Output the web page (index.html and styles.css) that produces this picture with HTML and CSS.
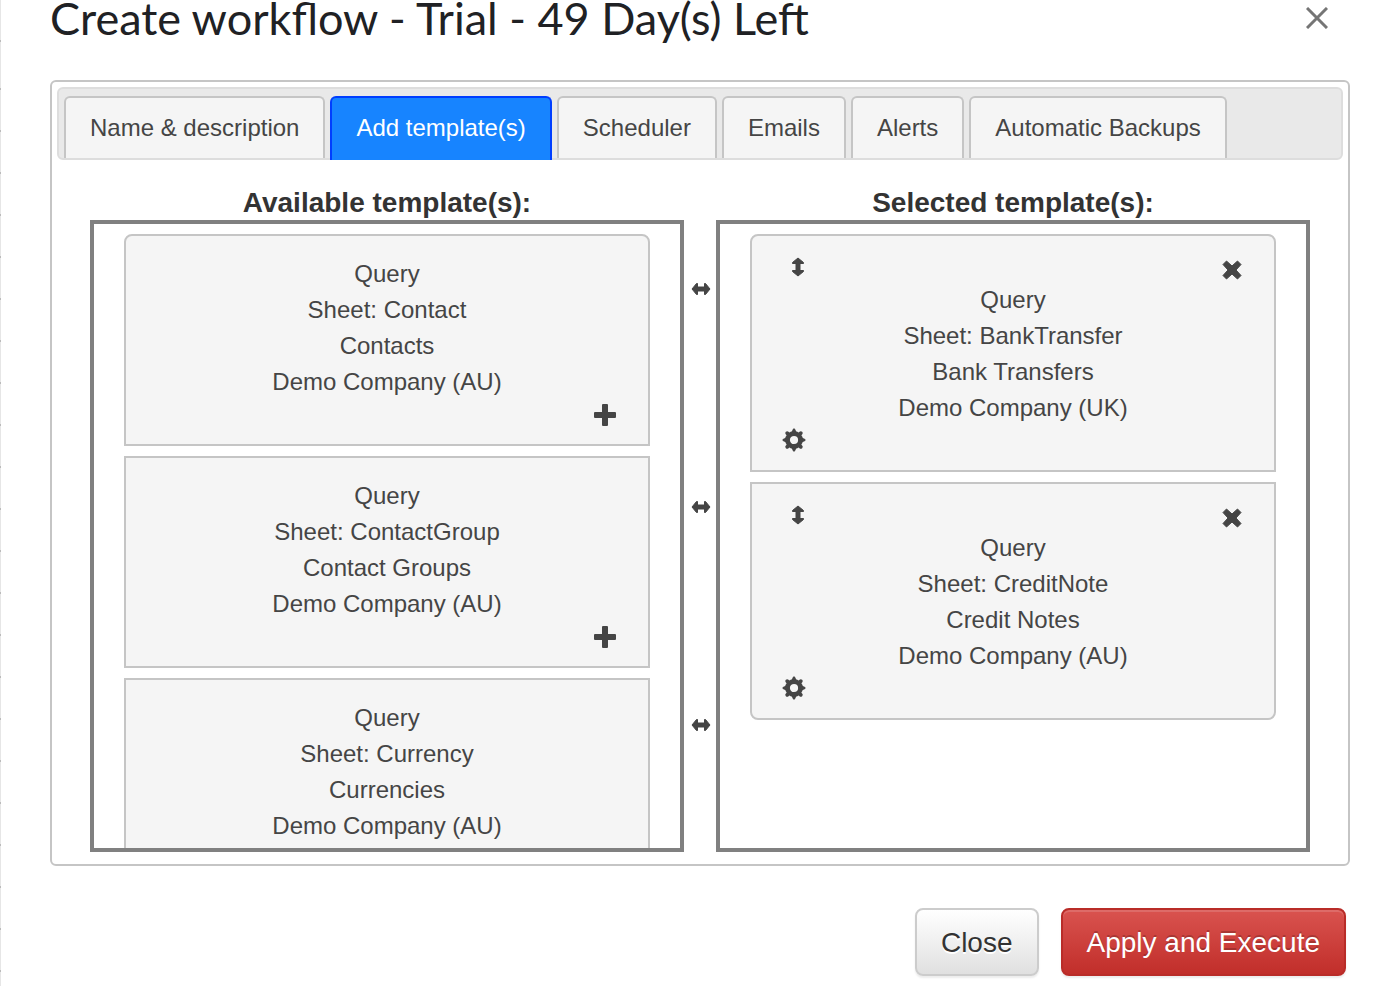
FILE: index.html
```
<!DOCTYPE html>
<html lang="en">
<head>
  <meta charset="utf-8">
  <title>Create workflow</title>
  <link rel="stylesheet" href="styles.css">
</head>
<body>
  <!-- icon sprites -->
  <svg class="sprites" aria-hidden="true">
    <symbol id="i-plus" viewBox="0 0 22 22">
      <path d="M9 0h4q1 0 1 1v7h7q1 0 1 1v4q0 1-1 1h-7v7q0 1-1 1H9q-1 0-1-1v-7H1q-1 0-1-1V9q0-1 1-1h7V1q0-1 1-1z"/>
    </symbol>
    <symbol id="i-remove" viewBox="0 0 20 20">
      <path d="M4.500 1L10 6 15.500 1 19 4.500 14 10l5 5.500-3.500 3.500L10 14 4.500 19 1 15.500 6 10 1 4.500z" stroke-width="1" stroke-linejoin="round"/>
    </symbol>
    <symbol id="i-arrows" viewBox="0 0 20 14">
      <path d="M1 7L5.500 1.500h1V5h7V1.500h1L19 7l-4.500 5.500h-1V9h-7v3.500h-1z" stroke-width="1" stroke-linejoin="round"/>
    </symbol>
    <symbol id="i-gear" viewBox="0 0 24 24">
      <circle cx="12" cy="12" r="6.500" fill="none" stroke-width="4.800"/>
      <path d="M11.500 1.200h1l1.800 4h-4.600zM11.500 22.800h1l1.800-4h-4.600zM1.200 11.500v1l4 1.800v-4.600zM22.800 11.500v1l-4 1.800v-4.600z" stroke-width="1.200" stroke-linejoin="round"/>
      <path d="M5.200 5.200l2 2M16.800 16.800l2 2M18.800 5.200l-2 2M7.200 16.800l-2 2" fill="none" stroke-width="3.800" stroke-linecap="round"/>
    </symbol>
  </svg>

  <div class="dialog">
    <div class="dialog-header">
      <h1>Create workflow - Trial - 49 Day(s) Left</h1>
      <button class="icon-btn dialog-x" aria-label="Close dialog">
        <svg width="22" height="22" viewBox="0 0 22 22"><path d="M1 1l20 20M21 1L1 21" fill="none" stroke-width="3"/></svg>
      </button>
    </div>

    <div class="tabs">
      <div class="tabs-nav" role="tablist">
        <button class="tab" role="tab">Name &amp; description</button>
        <button class="tab active" role="tab" aria-selected="true">Add template(s)</button>
        <button class="tab" role="tab">Scheduler</button>
        <button class="tab" role="tab">Emails</button>
        <button class="tab" role="tab">Alerts</button>
        <button class="tab" role="tab">Automatic Backups</button>
      </div>

      <div class="tab-panel" role="tabpanel">
        <div class="column">
          <h2>Available template(s):</h2>
          <ul class="list">
            <li class="card">
              <div>Query</div>
              <div>Sheet: Contact</div>
              <div>Contacts</div>
              <div>Demo Company (AU)</div>
              <div class="card-add"><button class="icon-btn" aria-label="Add"><svg width="22" height="22"><use href="#i-plus"/></svg></button></div>
            </li>
            <li class="card">
              <div>Query</div>
              <div>Sheet: ContactGroup</div>
              <div>Contact Groups</div>
              <div>Demo Company (AU)</div>
              <div class="card-add"><button class="icon-btn" aria-label="Add"><svg width="22" height="22"><use href="#i-plus"/></svg></button></div>
            </li>
            <li class="card">
              <div>Query</div>
              <div>Sheet: Currency</div>
              <div>Currencies</div>
              <div>Demo Company (AU)</div>
              <div class="card-add"><button class="icon-btn" aria-label="Add"><svg width="22" height="22"><use href="#i-plus"/></svg></button></div>
            </li>
          </ul>
        </div>

        <div class="between">
          <svg width="20" height="14"><use href="#i-arrows"/></svg>
          <svg width="20" height="14"><use href="#i-arrows"/></svg>
          <svg width="20" height="14"><use href="#i-arrows"/></svg>
        </div>

        <div class="column">
          <h2>Selected template(s):</h2>
          <ul class="list">
            <li class="card">
              <div class="card-top">
                <svg class="move" width="20" height="14"><use href="#i-arrows"/></svg>
                <button class="icon-btn" aria-label="Remove"><svg width="20" height="20"><use href="#i-remove"/></svg></button>
              </div>
              <div>Query</div>
              <div>Sheet: BankTransfer</div>
              <div>Bank Transfers</div>
              <div>Demo Company (UK)</div>
              <div class="card-settings"><button class="icon-btn" aria-label="Settings"><svg width="24" height="24"><use href="#i-gear"/></svg></button></div>
            </li>
            <li class="card last">
              <div class="card-top">
                <svg class="move" width="20" height="14"><use href="#i-arrows"/></svg>
                <button class="icon-btn" aria-label="Remove"><svg width="20" height="20"><use href="#i-remove"/></svg></button>
              </div>
              <div>Query</div>
              <div>Sheet: CreditNote</div>
              <div>Credit Notes</div>
              <div>Demo Company (AU)</div>
              <div class="card-settings"><button class="icon-btn" aria-label="Settings"><svg width="24" height="24"><use href="#i-gear"/></svg></button></div>
            </li>
          </ul>
        </div>
      </div>
    </div>

    <div class="dialog-footer">
      <button class="btn">Close</button>
      <button class="btn btn-danger">Apply and Execute</button>
    </div>
  </div>
</body>
</html>
```
FILE: styles.css
```
*, *:before, *:after { box-sizing: border-box; }
body {
  margin: 0;
  /* edge of the spreadsheet behind the dialog: row lines over a light strip */
  background:
    linear-gradient(#e6e6e6 40px, #bbb 40px 42px, #e6e6e6 42px) 0 0 / 1px 84px no-repeat,
    repeating-linear-gradient(#e6e6e6 0 4px, #bbb 4px 6px, #e6e6e6 6px 42px) 0 0 / 1px 100% no-repeat,
    #fff;
  font-family: "Liberation Sans", Arial, sans-serif;
  font-size: 24px;
  line-height: 36px;
  color: #454545;
}
h1, h2, ul { margin: 0; padding: 0; }
button { font: inherit; cursor: pointer; }
svg { display: block; fill: #454545; stroke: #454545; stroke-width: 0; }
.sprites { position: absolute; width: 0; height: 0; }

.icon-btn { display: block; padding: 0; border: 0; background: none; }

/* dialog */
.dialog { padding: 0 30px 10px 50px; }
.dialog-header {
  display: flex;
  justify-content: space-between;
  align-items: center;
  height: 36px;
  padding-right: 22px;
  margin-bottom: 44px;
}
.dialog-header h1 {
  font-family: Lato, sans-serif;
  font-size: 45px;
  font-weight: 400;
  line-height: 36px;
  color: #202124;
}
.dialog-x svg { stroke: #757575; }

/* tabs */
.tabs { padding: 5px; border: 2px solid #c5c5c5; border-radius: 6px; }
.tabs-nav {
  display: flex;
  gap: 5px;
  padding: 7px 5px 0;
  border: 2px solid #ddd;
  border-radius: 6px;
  background: #e9e9e9;
}
.tab {
  padding: 13px 24px;
  border: 2px solid #c5c5c5;
  border-bottom: 0;
  border-radius: 6px 6px 0 0;
  background: #f5f5f5;
  color: #454545;
  line-height: 34px;
}
.tab.active {
  margin-bottom: -2px;
  padding-bottom: 15px;
  border-color: #003eff;
  background: #1784ff;
  color: #fff;
}
.tab-panel { display: flex; padding: 24px 33px 7px; }

/* template lists */
.column { flex: 1; }
.column h2 { padding-top: 2px; font-size: 28px; line-height: 34px; text-align: center; color: #333; }
.list {
  height: 632px;
  padding: 10px 30px;
  border: 4px solid #808080;
  list-style: none;
  overflow-y: auto;
  scrollbar-width: none;
}
.card {
  margin-bottom: 10px;
  padding: 20px 30px 14px;
  border: 2px solid #c5c5c5;
  background: #f5f5f5;
  text-align: center;
}
.card:first-child { border-radius: 8px 8px 0 0; }
.card.last { border-radius: 0 0 8px 8px; }
.card-add { display: flex; justify-content: flex-end; align-items: center; height: 30px; padding-right: 2px; }
.card-top { display: flex; justify-content: space-between; align-items: flex-start; height: 26px; padding: 4px 2px 0 6px; }
.card-settings { display: flex; align-items: flex-start; height: 30px; padding-top: 2px; }
.move { transform: rotate(90deg); }

.between {
  display: flex;
  flex-direction: column;
  align-items: center;
  gap: 204px;
  width: 32px;
  padding: 98px 0 0 2px;
}

/* footer */
.dialog-footer { display: flex; justify-content: flex-end; gap: 22px; margin-top: 42px; padding-right: 4px; }
.btn {
  padding: 13px 24px 11px;
  border: 2px solid #ccc;
  border-radius: 8px;
  background: linear-gradient(#fff, #e0e0e0);
  box-shadow: 0 2px 2px rgba(0, 0, 0, 0.08);
  color: #333;
  font-size: 28px;
  line-height: 40px;
  text-shadow: 0 2px 0 #fff;
}
.btn-danger {
  border-color: #b92c28;
  background: linear-gradient(#d9534f, #c12e2a);
  box-shadow: inset 0 2px 0 rgba(255, 255, 255, 0.15), 0 2px 2px rgba(0, 0, 0, 0.08);
  color: #fff;
  text-shadow: 0 -2px 0 rgba(0, 0, 0, 0.2);
}
```
